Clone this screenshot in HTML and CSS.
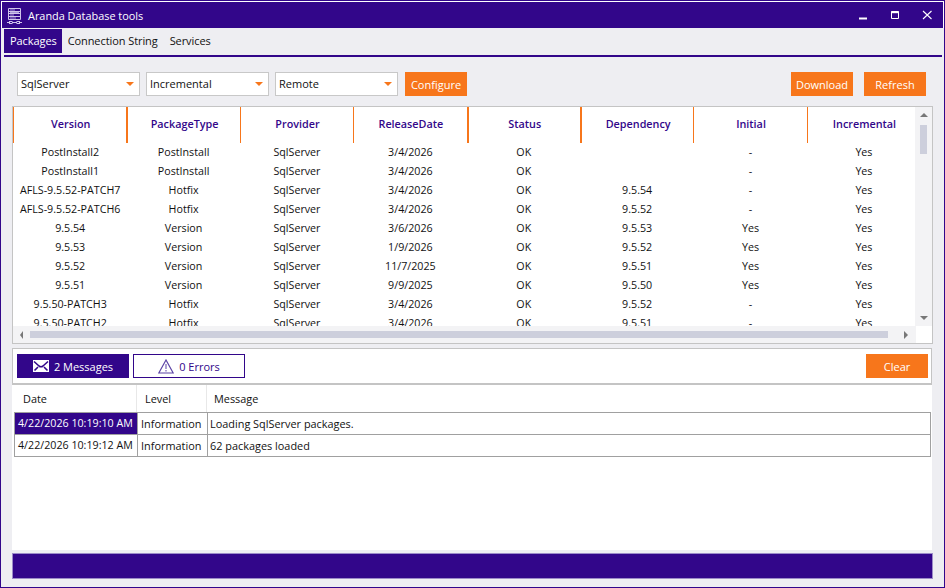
FILE: index.html
```html
<!DOCTYPE html>
<html lang="en">
<head>
    <meta charset="UTF-8">
    <title>Aranda Database tools</title>
    <link rel="stylesheet" href="styles.css">
</head>
<body>
    <div class="window">
        <div class="titlebar">
            <svg class="app-icon" width="15" height="16" viewBox="0 0 15 16" fill="none" stroke="#cfc4ea" stroke-width="1">
                <path d="M1.5 .5h12v11h-12z"/>
                <path d="M1.5 3.5h12M1.5 5.5h12M1.5 8.5h12"/>
                <path d="M3 2h5M3 4.5h9M3 7h4M3 10h6" stroke="#a796d6"/>
                <path d="M0 14.5h2M5 14.5h5M13 14.5h2"/>
                <rect x="2.5" y="13.5" width="2.5" height="2"/>
                <rect x="10" y="13.5" width="2.5" height="2"/>
            </svg>
            <span class="app-title">Aranda Database tools</span>
            <div class="window-controls">
                <svg width="10" height="10" viewBox="0 0 10 10"><path d="M1 8.5h8" stroke="#fff" stroke-width="2"/></svg>
                <svg width="10" height="10" viewBox="0 0 10 10" fill="none" stroke="#fff"><path d="M1.5 1.5h7v7h-7z"/><path d="M1.5 2.2h7" stroke-width="2"/></svg>
                <svg width="10" height="10" viewBox="0 0 10 10" fill="none" stroke="#fff" stroke-width="1.1"><path d="M1 1l8.5 8M9.5 1l-8.5 8"/></svg>
            </div>
        </div>

        <div class="menu">
            <div class="menu-item active">Packages</div>
            <div class="menu-item">Connection String</div>
            <div class="menu-item">Services</div>
        </div>

        <div class="toolbar">
            <div class="combo">SqlServer</div>
            <div class="combo">Incremental</div>
            <div class="combo">Remote</div>
            <button class="btn btn-configure">Configure</button>
            <div class="spacer"></div>
            <button class="btn">Download</button>
            <button class="btn">Refresh</button>
        </div>

        <div class="packages">
            <div class="packages-main">
                <div class="packages-view">
                    <div class="pk-row pk-head">
                        <div>Version</div>
                        <div class="thick">PackageType</div>
                        <div>Provider</div>
                        <div>ReleaseDate</div>
                        <div class="thick">Status</div>
                        <div class="thick">Dependency</div>
                        <div>Initial</div>
                        <div>Incremental</div>
                    </div>
                    <div class="pk-row"><div>PostInstall2</div><div>PostInstall</div><div>SqlServer</div><div>3/4/2026</div><div>OK</div><div></div><div>-</div><div>Yes</div></div>
                    <div class="pk-row"><div>PostInstall1</div><div>PostInstall</div><div>SqlServer</div><div>3/4/2026</div><div>OK</div><div></div><div>-</div><div>Yes</div></div>
                    <div class="pk-row"><div>AFLS-9.5.52-PATCH7</div><div>Hotfix</div><div>SqlServer</div><div>3/4/2026</div><div>OK</div><div>9.5.54</div><div>-</div><div>Yes</div></div>
                    <div class="pk-row"><div>AFLS-9.5.52-PATCH6</div><div>Hotfix</div><div>SqlServer</div><div>3/4/2026</div><div>OK</div><div>9.5.52</div><div>-</div><div>Yes</div></div>
                    <div class="pk-row"><div>9.5.54</div><div>Version</div><div>SqlServer</div><div>3/6/2026</div><div>OK</div><div>9.5.53</div><div>Yes</div><div>Yes</div></div>
                    <div class="pk-row"><div>9.5.53</div><div>Version</div><div>SqlServer</div><div>1/9/2026</div><div>OK</div><div>9.5.52</div><div>Yes</div><div>Yes</div></div>
                    <div class="pk-row"><div>9.5.52</div><div>Version</div><div>SqlServer</div><div>11/7/2025</div><div>OK</div><div>9.5.51</div><div>Yes</div><div>Yes</div></div>
                    <div class="pk-row"><div>9.5.51</div><div>Version</div><div>SqlServer</div><div>9/9/2025</div><div>OK</div><div>9.5.50</div><div>Yes</div><div>Yes</div></div>
                    <div class="pk-row"><div>9.5.50-PATCH3</div><div>Hotfix</div><div>SqlServer</div><div>3/4/2026</div><div>OK</div><div>9.5.52</div><div>-</div><div>Yes</div></div>
                    <div class="pk-row"><div>9.5.50-PATCH2</div><div>Hotfix</div><div>SqlServer</div><div>3/4/2026</div><div>OK</div><div>9.5.51</div><div>-</div><div>Yes</div></div>
                </div>
                <div class="vscroll">
                    <span class="arrow-up"></span>
                    <span class="vthumb"></span>
                    <span class="spacer"></span>
                    <span class="arrow-down"></span>
                </div>
            </div>
            <div class="hscroll">
                <span class="arrow-left"></span>
                <span class="hthumb"></span>
                <span class="arrow-right"></span>
            </div>
        </div>

        <div class="log">
            <div class="log-bar">
                <button class="tab-btn on">
                    <svg width="16" height="12" viewBox="0 0 16 12"><path fill="#fff" d="M0 0h16v12H0z"/><path fill="none" stroke="#32068a" stroke-width="1.6" d="M1 1.5l5 4.5q2 1.5 4 0l5-4.5M1.5 10.5l3.5-3.5M14.5 10.5l-3.5-3.5"/></svg>
                    2 Messages
                </button>
                <button class="tab-btn">
                    <svg width="16" height="15" viewBox="0 0 16 15" fill="none"><path stroke="#5c44a6" stroke-width="1.2" d="M8 1L.8 14h14.4z"/><path stroke="#8a78c0" stroke-width="1.4" d="M8 5v5M8 11v1.5"/></svg>
                    0 Errors
                </button>
                <div class="spacer"></div>
                <button class="btn btn-clear">Clear</button>
            </div>
            <div class="log-table">
                <div class="log-row log-head"><div>Date</div><div>Level</div><div>Message</div></div>
                <div class="log-row"><div class="selected">4/22/2026 10:19:10 AM</div><div>Information</div><div>Loading SqlServer packages.</div></div>
                <div class="log-row"><div>4/22/2026 10:19:12 AM</div><div>Information</div><div>62 packages loaded</div></div>
            </div>
        </div>

        <div class="statusbar"></div>
    </div>
</body>
</html>
```

FILE: styles.css
```css
html, body {
    margin: 0;
    height: 100%;
}

body {
    font-family: "Open Sans", "Noto Sans", sans-serif;
    font-size: 11px;
    color: #111;
    background-color: #eeeef2;
}

.window {
    width: 945px;
    height: 588px;
    box-sizing: border-box;
    border: 1px solid #32068a;
    background-color: #eeeef2;
    display: flex;
    flex-direction: column;
}

.spacer {
    flex: 1;
}

.titlebar {
    height: 27px;
    box-sizing: border-box;
    flex: none;
    display: flex;
    align-items: center;
    background-color: #32068a;
    border: 1px solid #fff;
    border-bottom: none;
    padding-left: 5px;
    color: #fff;
}

.app-icon {
    margin-top: 2px;
}

.app-title {
    margin-left: 6px;
    font-size: 10.9px;
}

.window-controls {
    margin-left: auto;
    margin-right: 11px;
    display: flex;
    gap: 22px;
}

.menu {
    flex: none;
    height: 29px;
    margin: 0 2px 0 3px;
    padding-top: 1px;
    box-sizing: border-box;
    border-bottom: 2px solid #32068a;
    display: flex;
    align-items: flex-start;
}

.menu-item {
    height: 24px;
    line-height: 24px;
    padding: 0 6px;
    letter-spacing: -0.08px;
}

.menu-item.active {
    background-color: #32068a;
    color: #fff;
    padding-right: 5px;
}

.toolbar {
    flex: none;
    display: flex;
    align-items: flex-start;
    gap: 6px;
    margin-top: 15px;
    padding: 0 18px 0 16px;
}

.combo {
    width: 123px;
    height: 24px;
    box-sizing: border-box;
    line-height: 22px;
    padding-left: 3px;
    background-color: #fff;
    border: 1px solid #c8c8c8;
    position: relative;
}

.combo::after {
    content: "";
    position: absolute;
    right: 5px;
    top: 9px;
    border-left: 4px solid transparent;
    border-right: 4px solid transparent;
    border-top: 4px solid #f7761b;
}

.btn {
    width: 62px;
    height: 24px;
    padding: 0;
    border: none;
    background-color: #f7761b;
    color: #fff;
    font: inherit;
}

.btn-configure {
    margin-left: 1px;
}

.btn + .btn {
    margin-left: 5px;
}

.packages {
    flex: none;
    margin: 10px 11px 0;
    height: 238px;
    box-sizing: border-box;
    border: 1px solid #c4c4c4;
    background-color: #fff;
    display: flex;
    flex-direction: column;
}

.packages-main {
    height: 219px;
    display: flex;
}

.packages-view {
    flex: 1;
    overflow: hidden;
}

.pk-row {
    display: grid;
    grid-template-columns: repeat(8, 113.4px);
    height: 19px;
    line-height: 19px;
    text-align: center;
    font-size: 10.7px;
}

.pk-row div {
    padding-left: 1px;
}

.pk-head {
    height: 36px;
    line-height: 34px;
    font-size: 10.8px;
    font-weight: 600;
    color: #32068a;
}

.pk-head div {
    box-sizing: border-box;
    border-left: 1px solid #f7761b;
}

.pk-head div.thick {
    border-left-width: 2px;
}

.vscroll {
    width: 17px;
    flex: none;
    background-color: #f3f3f5;
    display: flex;
    flex-direction: column;
    align-items: center;
}

.vthumb {
    width: 7px;
    height: 29px;
    background-color: #cdcfdc;
    margin-top: 8px;
}

.arrow-up, .arrow-down, .arrow-left, .arrow-right {
    width: 0;
    height: 0;
    flex: none;
    border-style: solid;
    border-color: transparent;
}

.arrow-up {
    margin-top: 6px;
    border-width: 0 4px 4px;
    border-bottom-color: #777;
}

.arrow-down {
    margin-bottom: 6px;
    border-width: 4px 4px 0;
    border-top-color: #777;
}

.hscroll {
    height: 17px;
    width: 903px;
    background-color: #f3f3f5;
    display: flex;
    align-items: center;
}

.arrow-left {
    margin-left: 7px;
    border-width: 4px 3px 4px 0;
    border-right-color: #777;
}

.arrow-right {
    margin-left: 16px;
    border-width: 4px 0 4px 4px;
    border-left-color: #777;
}

.hthumb {
    width: 858px;
    height: 7px;
    margin-left: 7px;
    background-color: #cdcfdc;
}

.log {
    flex: none;
    height: 202px;
    margin: 4px 12px 0 11px;
    box-sizing: border-box;
    background-color: #fff;
    border-top: 1px solid #c4c4c4;
    display: flex;
    flex-direction: column;
}

.log-bar {
    flex: none;
    height: 36px;
    box-sizing: border-box;
    padding: 5px 3px 0 4px;
    display: flex;
    align-items: flex-start;
    gap: 4px;
    border-bottom: 2px solid #c4c4c4;
    border-left: 1px solid #c4c4c4;
    border-right: 1px solid #c4c4c4;
}

.tab-btn {
    width: 112px;
    height: 24px;
    padding: 0;
    box-sizing: border-box;
    border: 1px solid #32068a;
    background-color: #fff;
    color: #32068a;
    font: inherit;
    display: flex;
    align-items: center;
    justify-content: center;
    gap: 5px;
}

.tab-btn.on {
    background-color: #32068a;
    color: #fff;
}

.log-table {
    margin: 0 1px 0 2px;
    font-size: 10.9px;
}

.log-row {
    display: grid;
    grid-template-columns: 122px 70px 1fr;
    height: 22px;
    line-height: 21px;
    box-sizing: border-box;
    border: 1px solid #a0a0a0;
    border-top: none;
}

.log-row div {
    padding-left: 3px;
    border-left: 1px solid #a0a0a0;
}

.log-row div:first-child {
    border-left: none;
    font-size: 10.7px;
}

.log-row div:last-child {
    padding-left: 2px;
}

.log-row .selected {
    background-color: #32068a;
    color: #fff;
}

.log-head {
    height: 28px;
    line-height: 27px;
    border: none;
    border-bottom: 1px solid #a0a0a0;
}

.log-head div {
    padding-left: 8px;
    border-left-color: #e8e8e8;
}

.log-head div:first-child {
    padding-left: 9px;
    font-size: 10.9px;
}

.log-head div:last-child {
    padding-left: 7px;
}

.statusbar {
    flex: none;
    height: 26px;
    margin: 3px 11px 0 11px;
    box-sizing: border-box;
    background-color: #32068a;
    border: 1px solid #9c8cc8;
}
```
